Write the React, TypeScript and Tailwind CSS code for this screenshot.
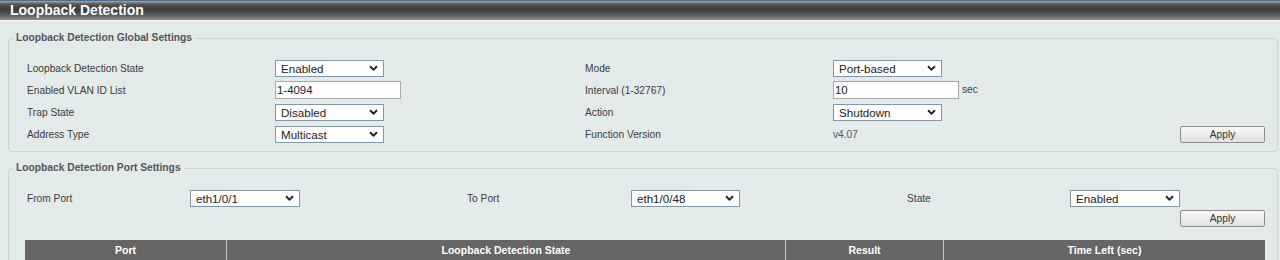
import React from "react";

const font = { fontFamily: '"Liberation Sans", Arial, sans-serif' };

function Chevron() {
  return (
    <svg width="9" height="6" viewBox="0 0 9 6" className="pointer-events-none absolute right-[5px] top-1/2 -translate-y-1/2">
      <path d="M1 1.2 L4.5 4.6 L8 1.2" fill="none" stroke="#222" strokeWidth="1.9" />
    </svg>
  );
}

function Select({ value, w }: { value: string; w: string }) {
  return (
    <div className={`relative h-[17px] ${w} border border-[#8296aa] bg-white`}>
      <div className="pl-[5px] text-[11.6px] leading-[15px] text-[#222]">{value}</div>
      <Chevron />
    </div>
  );
}

function TextInput({ value }: { value: string }) {
  return (
    <div className="h-[18px] w-[126px] border border-[#a8a8a8] bg-white pl-[1px] text-[11.4px] leading-[16px] text-[#222]">
      {value}
    </div>
  );
}

function ApplyBtn() {
  return (
    <button className="h-[17px] w-[85px] rounded-[2px] border border-[#8d8d8d] bg-gradient-to-b from-[#f7f7f7] to-[#e2e2e2] text-[10.2px] leading-[15px] text-[#333]">
      Apply
    </button>
  );
}

function Label({ children }: { children: React.ReactNode }) {
  return <div className="pt-[2px] text-[10.2px] text-[#3c3c3c]">{children}</div>;
}

export default function App() {
  return (
    <div style={font} className="h-[260px] w-[1280px] overflow-hidden bg-[#e3eaea]">
      {/* Title bar */}
      <div className="h-[21px] border-t border-[#4f6f8a] border-b border-b-[#f2f4f4] bg-[linear-gradient(to_bottom,#a4a4a4_0%,#555555_18%,#3a3a3a_45%,#5e5e5e_75%,#8c8c8c_100%)]">
        <div className="pl-[10px] text-[14px] font-bold leading-[19px] text-white">Loopback Detection</div>
      </div>

      {/* Global settings */}
      <fieldset className="ml-[8px] mr-[2px] mt-[10px] rounded-[4px] border border-[#c9d1d1] p-0">
        <legend className="ml-[4px] px-[3px] text-[10.25px] font-bold leading-[14px] text-[#555]">
          Loopback Detection Global Settings
        </legend>
        <div className="grid grid-cols-[248px_310px_248px_1fr] pb-[6px] pl-[18px] pr-[12px] pt-[12px] [&>div]:flex [&>div]:h-[22px] [&>div]:items-center">
          <div><Label>Loopback Detection State</Label></div>
          <div><Select value="Enabled" w="w-[109px]" /></div>
          <div><Label>Mode</Label></div>
          <div><Select value="Port-based" w="w-[109px]" /></div>

          <div><Label>Enabled VLAN ID List</Label></div>
          <div><TextInput value="1-4094" /></div>
          <div><Label>Interval (1-32767)</Label></div>
          <div>
            <TextInput value="10" />
            <span className="ml-[3px] text-[10.2px] text-[#3c3c3c]">sec</span>
          </div>

          <div><Label>Trap State</Label></div>
          <div><Select value="Disabled" w="w-[109px]" /></div>
          <div><Label>Action</Label></div>
          <div><Select value="Shutdown" w="w-[109px]" /></div>

          <div><Label>Address Type</Label></div>
          <div><Select value="Multicast" w="w-[109px]" /></div>
          <div><Label>Function Version</Label></div>
          <div className="justify-between">
            <span className="pt-[2px] text-[10.2px] text-[#555]">v4.07</span>
            <ApplyBtn />
          </div>
        </div>
      </fieldset>

      {/* Port settings */}
      <fieldset className="ml-[8px] mr-[2px] mt-[9px] h-[200px] rounded-[4px] border border-[#c9d1d1] p-0">
        <legend className="ml-[4px] px-[3px] text-[10.25px] font-bold leading-[14px] text-[#555]">
          Loopback Detection Port Settings
        </legend>
        <div className="pl-[18px] pr-[12px] pt-[12px]">
          <div className="grid h-[22px] grid-cols-[163px_277px_164px_276px_163px_1fr] items-center">
            <Label>From Port</Label>
            <Select value="eth1/0/1" w="w-[110px]" />
            <Label>To Port</Label>
            <Select value="eth1/0/48" w="w-[109px]" />
            <Label>State</Label>
            <Select value="Enabled" w="w-[110px]" />
          </div>
          <div className="mt-[1px] flex justify-end">
            <ApplyBtn />
          </div>
          <div className="-ml-[2px] mt-[13px] flex h-[22px] bg-[#666666] text-[10.5px] font-bold text-white">
            <div className="flex w-[202px] items-center justify-center border-r border-[#c8c8c8]">Port</div>
            <div className="flex w-[559px] items-center justify-center border-r border-[#c8c8c8]">Loopback Detection State</div>
            <div className="flex w-[158px] items-center justify-center border-r border-[#c8c8c8]">Result</div>
            <div className="flex flex-1 items-center justify-center">Time Left (sec)</div>
          </div>
        </div>
      </fieldset>
    </div>
  );
}
